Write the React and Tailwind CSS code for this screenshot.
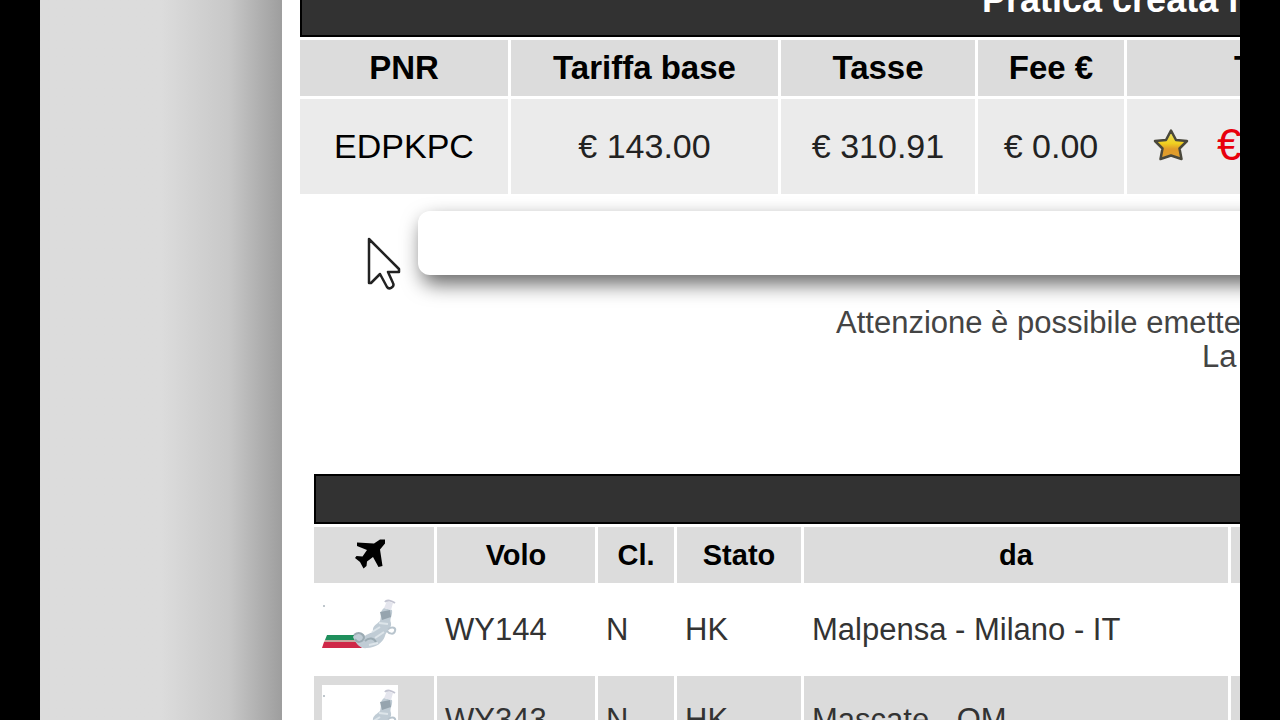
function PlaneIcon() {
  return (
    <svg viewBox="0 1 32 32" className="mx-auto h-8 w-8" role="img" aria-label="Compagnia">
      <path
        fill="#000"
        d="M20 5.500L26 1.500L31 1.500L31 5.500L26 11.500L28.500 28L24.500 29L19 19L13 23.500L12.500 28L9.500 30.500L6 24L1 20L2.500 18L8.500 18.500L13 12L3 8L3 4.500Z"
      />
    </svg>
  );
}

function AirlineLogo() {
  return (
    <svg viewBox="0 0 76 70" className="block h-[70px] w-[76px] bg-white" role="img" aria-label="Oman Air">
      <circle cx="2" cy="11" r="1" fill="#aab4bd" />
      <path d="M5 40H32L36 45H3Z" fill="#1f8f5c" />
      <path d="M3 45H36L38 47H2Z" fill="#c9a79f" />
      <path d="M2 47H36L40 53H0Z" fill="#cf2848" />
      <path
        d="M31 42C34 36 40 38 43 41C46 38 49 39 51 36C50 31 55 29 58 26C60 20 57 17 62 13L70 15C71 21 67 23 69 28C70 34 64 36 63 41C61 48 53 53 45 53C38 54 34 49 31 42Z"
        fill="#c0ccd5"
      />
      <path d="M58 17L68 15L69 22L60 25Z" fill="#96a4ae" />
      <path d="M62 13L65 6L71 8L69 15Z" fill="#e4e5ed" />
      <path d="M63 7C65 4 70 6 73 8" fill="none" stroke="#c3c4d1" strokeWidth="2" />
      <path d="M66 34C71 31 74 33 73 36C72 40 67 39 65 36" fill="none" stroke="#b8c4cd" strokeWidth="2" />
      <path d="M32 40C37 36 42 39 42 43C40 48 35 48 33 44M43 46C47 42 52 43 54 47" fill="none" stroke="#9babb3" strokeWidth="2" />
      <path d="M50 37L58 32M53 43L62 37M47 50L56 48M57 28L66 29" fill="none" stroke="#dde5ea" strokeWidth="2" />
    </svg>
  );
}

function StarIcon() {
  return (
    <svg viewBox="0 0 36 34" className="h-[34px] w-9 shrink-0" role="img" aria-label="Preferito">
      <defs>
        <linearGradient id="star-fill" x1="0" y1="0" x2="0" y2="1">
          <stop offset="0" stopColor="#e6e070" />
          <stop offset="0.45" stopColor="#f0d020" />
          <stop offset="0.65" stopColor="#e09a28" />
          <stop offset="1" stopColor="#e0a030" />
        </linearGradient>
      </defs>
      <path
        d="M18 2.500L23 12L34 13L26.500 20.500L28.500 31L18 27.500L7.500 31L9.500 20.500L2 13L13 12Z"
        fill="url(#star-fill)"
        stroke="#4a483c"
        strokeWidth="2.500"
        strokeLinejoin="round"
      />
    </svg>
  );
}

function Pointer() {
  return (
    <svg viewBox="0 0 36 56" className="absolute left-[84px] top-[236px] h-14 w-9" aria-hidden="true">
      <path
        d="M3 3V47L5 47L14 38L21 51C23 54 29 51 27 47L22 36H33V33Z"
        fill="#fff"
        stroke="#222"
        strokeWidth="2.500"
        strokeLinejoin="round"
      />
    </svg>
  );
}

const flights = [
  { volo: "WY144", classe: "N", stato: "HK", da: "Malpensa - Milano - IT", shade: "" },
  { volo: "WY343", classe: "N", stato: "HK", da: "Mascate - OM", shade: "bg-[#dbdbdb]" },
];

function FareTable() {
  return (
    <table className="-ml-[3px] -mt-[37px] w-[1300px] table-fixed border-separate border-spacing-[3px] text-center text-[33px] leading-10">
      <colgroup>
        <col className="w-[208px]" />
        <col className="w-[267px]" />
        <col className="w-[194px]" />
        <col className="w-[146px]" />
        <col />
      </colgroup>
      <thead>
        <tr>
          <th colSpan={5} className="h-[71px] border-2 border-black bg-[#323232] pb-1 pl-[680px] text-left text-[36px] text-white">
            Pratica creata il
          </th>
        </tr>
        <tr className="bg-[#dcdcdc] text-black">
          <th className="h-14">PNR</th>
          <th>Tariffa base</th>
          <th>Tasse</th>
          <th>Fee €</th>
          <th className="pl-[107px] text-left">T</th>
        </tr>
      </thead>
      <tbody className="text-[34px]">
        <tr className="bg-[#ebebeb] text-[#222]">
          <td className="h-[95px] pb-0.5 text-black">EDPKPC</td>
          <td className="pb-0.5">€ 143.00</td>
          <td className="pb-0.5">€ 310.91</td>
          <td className="pb-0.5">€ 0.00</td>
          <td>
            <div className="flex items-center gap-7 pb-1 pl-[26px]">
              <StarIcon />
              <span className="text-[44px] text-[#e8000c]">€</span>
            </div>
          </td>
        </tr>
      </tbody>
    </table>
  );
}

function FlightTable() {
  return (
    <table className="ml-[11px] mt-[97px] w-[1300px] table-fixed border-separate border-spacing-[3px] text-left text-[31px] leading-10">
      <colgroup>
        <col className="w-[120px]" />
        <col className="w-[158px]" />
        <col className="w-[76px]" />
        <col className="w-[124px]" />
        <col className="w-[424px]" />
        <col />
      </colgroup>
      <thead>
        <tr>
          <td colSpan={6} className="h-[50px] border-2 border-black bg-[#323232]" />
        </tr>
        <tr className="bg-[#dcdcdc] text-center text-[29px] text-black">
          <th className="h-14 pr-2"><PlaneIcon /></th>
          <th>Volo</th>
          <th>Cl.</th>
          <th>Stato</th>
          <th>da</th>
          <td />
        </tr>
      </thead>
      <tbody className="text-[#333]">
        {flights.map((f) => (
          <tr key={f.volo} className={f.shade}>
            <td className="h-[87px] pl-2"><AirlineLogo /></td>
            <td className="pl-2">{f.volo}</td>
            <td className="pl-2">{f.classe}</td>
            <td className="pl-2">{f.stato}</td>
            <td className="pl-2">{f.da}</td>
            <td />
          </tr>
        ))}
      </tbody>
    </table>
  );
}

export default function App() {
  return (
    <div className="h-screen overflow-hidden bg-black px-10 font-['Liberation_Sans',Arial,sans-serif]">
      <div className="flex h-full overflow-hidden">
        <aside className="w-[242px] shrink-0 bg-linear-to-r from-[#dcdcdc] from-50% via-[#c8c8c8] via-78% to-[#9e9e9e]" />
        <main className="relative flex h-full min-w-0 flex-1 flex-col overflow-hidden bg-white pl-[18px]">
          <FareTable />
          <section className="ml-[118px] mt-3.5 w-[1100px] shrink-0">
            <div className="h-16 rounded-xl bg-white shadow-[4px_9px_20px_rgba(0,0,0,0.6)]" />
          </section>
          <p className="mt-[31px] w-[1100px] shrink-0 pl-[536px] text-[31px] leading-[34px] text-[#444]">
            Attenzione è possibile emettere
            <span className="block pl-[366px]">La</span>
          </p>
          <FlightTable />
          <Pointer />
        </main>
      </div>
    </div>
  );
}
